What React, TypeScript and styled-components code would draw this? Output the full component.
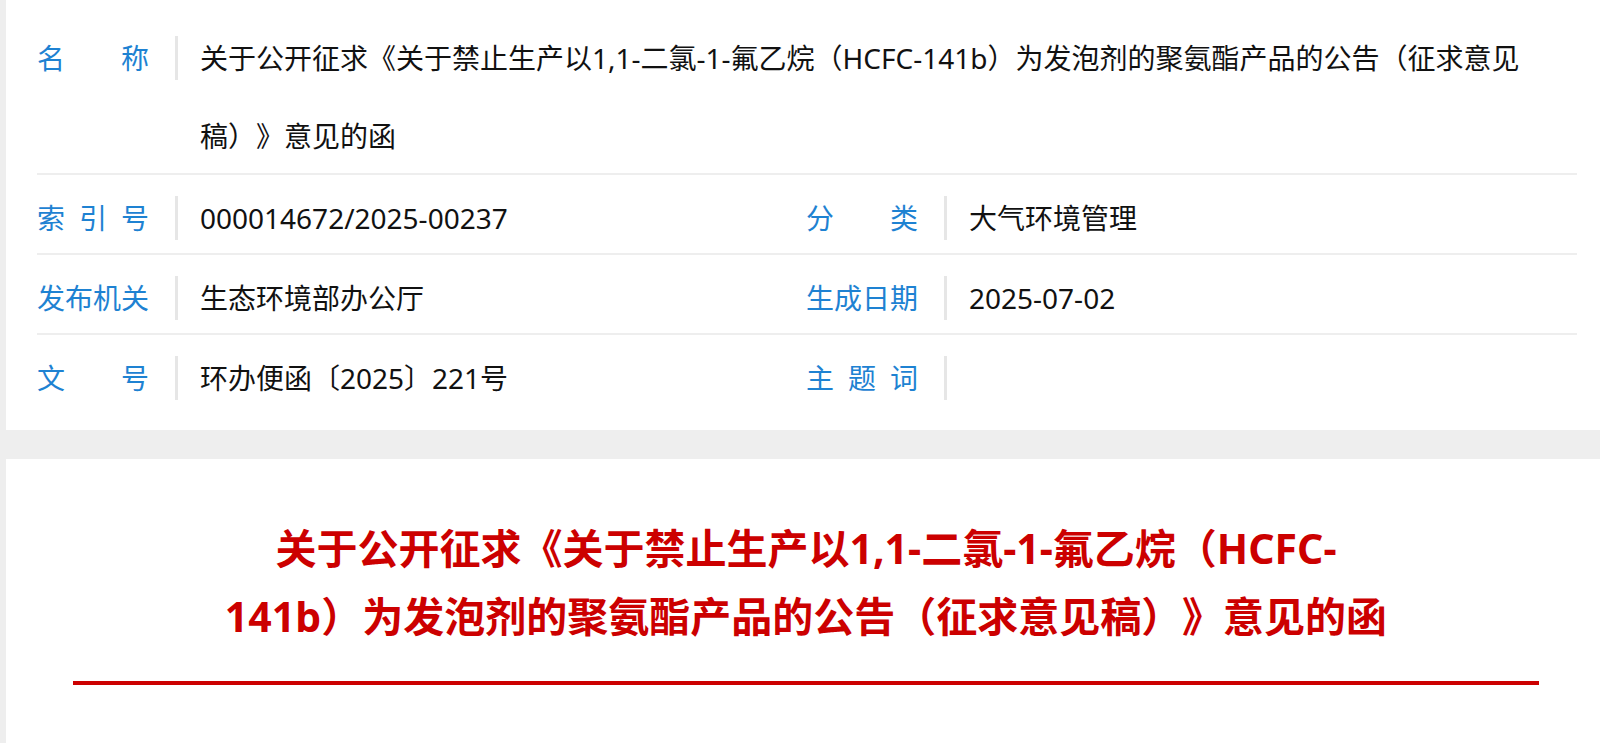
import React from 'react'
import styled, { createGlobalStyle } from 'styled-components'

const GlobalStyle = createGlobalStyle`
body {
  margin: 0;
  background: #eeeeee;
  font-family: "Noto Sans", "Noto Sans CJK SC", sans-serif;
  text-spacing-trim: space-all;
}
`

const Page = styled.div`
  padding-left: 6px;
  display: flex;
  flex-direction: column;
  gap: 29px;
`

const InfoCard = styled.div`
  background: #fff;
  padding: 15px 23px 17px 31px;
`

const Row = styled.div`
  display: grid;
  grid-template-columns: 769px 1fr;
  padding: 21px 0 13px;
  border-bottom: 2px solid #eeeeee;
  &:last-child {
    border-bottom: none;
  }
`

const Field = styled.div<{ $span?: boolean }>`
  display: flex;
  align-items: flex-start;
  grid-column: ${p => (p.$span ? '1 / -1' : 'auto')};
`

const LabelBox = styled.div`
  width: 112px;
  flex-shrink: 0;
  display: flex;
  justify-content: space-between;
  color: #1e82d2;
  font-size: 28px;
  line-height: 44px;
`

const Separator = styled.div`
  width: 3px;
  height: 44px;
  flex-shrink: 0;
  background: #e6e6e6;
  margin: 0 22px 0 26px;
`

const Value = styled.div<{ $multi?: boolean }>`
  color: #111;
  font-size: 28px;
  line-height: ${p => (p.$multi ? '78px' : '44px')};
  margin: ${p => (p.$multi ? '-17px 0 -15px' : '0')};
  max-width: 1322px;
`

const ArticleCard = styled.div`
  background: #fff;
  padding: 55px 61px 80px 67px;
`

const Title = styled.h1`
  margin: 0 auto;
  max-width: 1180px;
  text-align: center;
  color: #cc0000;
  font-size: 41px;
  line-height: 68px;
  font-weight: 700;
`

const Rule = styled.div`
  height: 4px;
  background: #cc0000;
  margin-top: 31px;
`

const Label: React.FC<{ text: string }> = ({ text }) => (
  <LabelBox>
    {text.split('').map((c, i) => (
      <span key={i}>{c}</span>
    ))}
  </LabelBox>
)

const Item: React.FC<{ label: string; value: string; span?: boolean; multi?: boolean }> = ({ label, value, span, multi }) => (
  <Field $span={span}>
    <Label text={label} />
    <Separator />
    <Value $multi={multi}>{value}</Value>
  </Field>
)

const title = '关于公开征求《关于禁止生产以1,1-二氯-1-氟乙烷（HCFC-141b）为发泡剂的聚氨酯产品的公告（征求意见稿）》意见的函'

const App: React.FC = () => {
  return (
    <>
      <GlobalStyle />
      <Page>
        <InfoCard>
          <Row>
            <Item label="名称" value={title} span multi />
          </Row>
          <Row>
            <Item label="索引号" value="000014672/2025-00237" />
            <Item label="分类" value="大气环境管理" />
          </Row>
          <Row>
            <Item label="发布机关" value="生态环境部办公厅" />
            <Item label="生成日期" value="2025-07-02" />
          </Row>
          <Row>
            <Item label="文号" value="环办便函〔2025〕221号" />
            <Item label="主题词" value="" />
          </Row>
        </InfoCard>
        <ArticleCard>
          <Title>
            关于公开征求《关于禁止生产以1,1-二氯-1-氟乙烷（HCFC-<wbr />141b）为发泡剂的聚氨酯产品的公告（征求意见稿）》意见的函
          </Title>
          <Rule />
        </ArticleCard>
      </Page>
    </>
  )
}

export default App
